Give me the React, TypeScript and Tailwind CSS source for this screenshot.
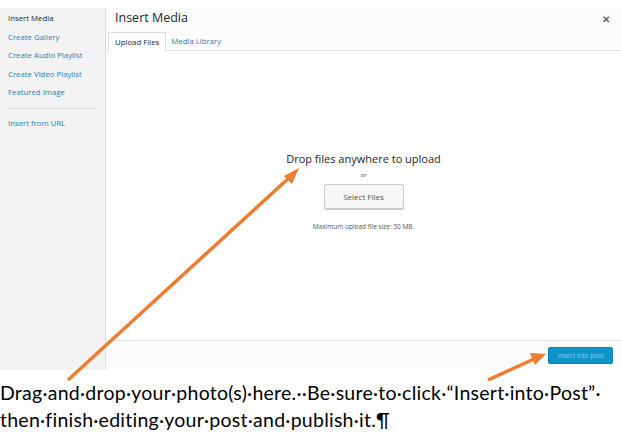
import React from 'react';

const sideLinks = ['Create Gallery', 'Create Audio Playlist', 'Create Video Playlist', 'Featured Image'];

export default function App() {
  return (
    <div className="relative w-[621px] h-[438px] bg-white overflow-hidden" style={{ fontFamily: '"Open Sans", sans-serif' }}>
      <div className="h-[8px]" />
      <div className="flex h-[362px]">
        {/* sidebar */}
        <div className="w-[106px] shrink-0 bg-[#f3f3f3] border-r border-[#dddddd] px-[8px] pt-[1px] text-[7.8px]">
          <div className="h-[18.6px] leading-[18.6px] text-[#23282d]">Insert Media</div>
          {sideLinks.map((l) => (
            <div key={l} className="h-[18.6px] leading-[18.6px] text-[#2a7fb0]">{l}</div>
          ))}
          <div className="border-t border-[#dcdcdc] mt-[6px] mb-[5px] w-[87px]" />
          <div className="h-[18.6px] leading-[18.6px] text-[#2a7fb0]">Insert from URL</div>
        </div>

        {/* main */}
        <div className="flex-1 flex flex-col">
          <div className="h-[43px] bg-[#fcfcfc] border-b border-[#e5e5e5] relative pl-[9px]">
            <div className="text-[12.5px] text-[#23282d] leading-[18px] pt-[1px]">Insert Media</div>
            <div className="absolute right-[11px] top-[4px] text-[10px] font-bold text-[#666]">✕</div>
            <div className="flex items-end mt-[5px] text-[7.8px] -ml-[7px]">
              <div className="h-[19px] px-[6px] border border-b-0 border-[#dddddd] bg-white leading-[18px] text-[#23282d]">Upload Files</div>
              <div className="h-[19px] px-[5px] leading-[18px] text-[#2a7fb0]">Media Library</div>
            </div>
          </div>

          <div className="flex-1 bg-white flex flex-col items-center pt-[100px]">
            <div className="text-[11px] text-[#23282d] leading-[16px]">Drop files anywhere to upload</div>
            <div className="text-[6px] text-[#555] mt-[3px] leading-[10px]">or</div>
            <div className="mt-[4px] w-[80px] h-[25px] border border-[#cccccc] bg-[#f7f7f7] rounded-[2px] shadow-[0_1px_0_#cccccc] flex items-center justify-center text-[8px] text-[#555]">Select Files</div>
            <div className="mt-[13px] text-[6.5px] text-[#555]">Maximum upload file size: 50 MB.</div>
          </div>

          <div className="h-[30px] bg-[#fcfcfc] border-t border-[#e5e5e5] flex items-center justify-end pr-[8px]">
            <div className="w-[65px] h-[17px] rounded-[2px] bg-[#0d93c9] border border-[#0b85b8] flex items-center justify-center text-[6.5px] text-[#8fcbe6]">Insert into post</div>
          </div>
        </div>
      </div>

      <div className="pt-[9px] text-[19.5px] leading-[27px] text-black tracking-[0.25px]" style={{ fontFamily: 'Lato, "Liberation Sans", sans-serif' }}>
        <div className="whitespace-nowrap">Drag·and·drop·your·photo(s)·here.··Be·sure·to·click·“Insert·into·Post”·</div>
        <div className="whitespace-nowrap">then·finish·editing·your·post·and·publish·it.¶</div>
      </div>

      {/* annotation arrows */}
      <svg className="absolute left-0 top-0 pointer-events-none" width="621" height="438">
        <line x1="68" y1="380" x2="290" y2="177" stroke="#ed7d31" strokeWidth="3.5" />
        <polygon points="299,168 284,176 292,184" fill="#ed7d31" />
        <line x1="488" y1="380" x2="534" y2="359" stroke="#ed7d31" strokeWidth="3.5" />
        <polygon points="546,354 530,353 535,365" fill="#ed7d31" />
      </svg>
    </div>
  );
}
